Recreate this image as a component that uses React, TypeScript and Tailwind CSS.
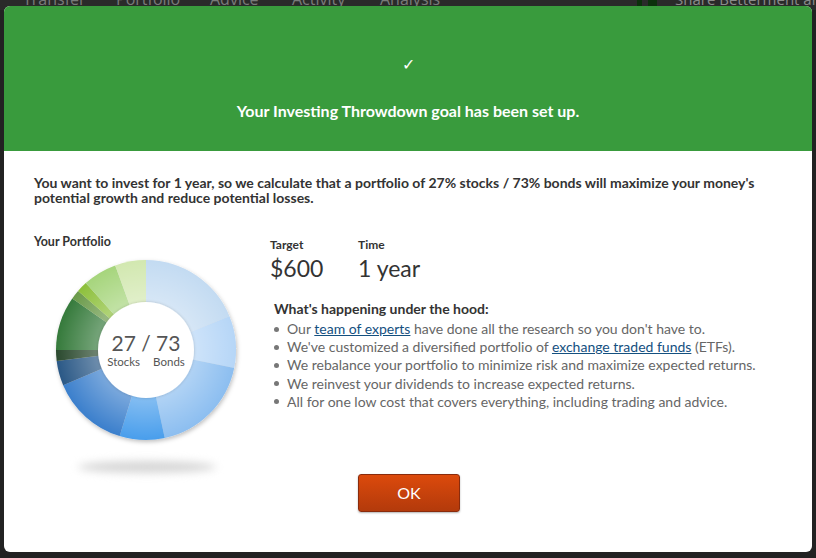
import React from 'react'

const slices = [
  { from: 0, to: 68, color: '#c3dbf2' },
  { from: 68, to: 101.5, color: '#b6d6f7' },
  { from: 101.5, to: 168, color: '#8cbef0' },
  { from: 168, to: 197, color: '#4a9eec' },
  { from: 197, to: 247, color: '#3a7fcc' },
  { from: 247, to: 263, color: '#2c5886' },
  { from: 263, to: 270, color: '#2b4a2f' },
  { from: 270, to: 305, color: '#357a3b' },
  { from: 305, to: 311, color: '#6a9a48' },
  { from: 311, to: 318, color: '#8dc03b' },
  { from: 318, to: 340, color: '#a6d57c' },
  { from: 340, to: 360, color: '#d2e8b0' },
]

function pt(r: number, deg: number) {
  const a = ((deg - 90) * Math.PI) / 180
  return `${(100 + r * Math.cos(a)).toFixed(2)} ${(100 + r * Math.sin(a)).toFixed(2)}`
}

function slicePath(from: number, to: number, r: number) {
  const large = to - from > 180 ? 1 : 0
  return `M100 100 L${pt(r, from)} A${r} ${r} 0 ${large} 1 ${pt(r, to)} Z`
}

function Donut() {
  return (
    <div className="relative h-[200px] w-[200px]">
      <svg viewBox="0 0 200 200" className="h-[200px] w-[200px]">
        <defs>
          <radialGradient id="shade" cx="100" cy="100" r="90" gradientUnits="userSpaceOnUse">
            <stop offset="0.5" stopColor="#ffffff" stopOpacity="0.35" />
            <stop offset="1" stopColor="#ffffff" stopOpacity="0" />
          </radialGradient>
          <filter id="ds" x="-20%" y="-20%" width="140%" height="140%">
            <feDropShadow dx="1" dy="2" stdDeviation="2" floodColor="#000" floodOpacity="0.25" />
          </filter>
          <filter id="inner" x="-20%" y="-20%" width="140%" height="140%">
            <feDropShadow dx="0" dy="0" stdDeviation="1.5" floodColor="#000" floodOpacity="0.2" />
          </filter>
        </defs>
        <g filter="url(#ds)">
          {slices.map((s) => (
            <path key={s.from} d={slicePath(s.from, s.to, 90)} fill={s.color} />
          ))}
        </g>
        <circle cx="100" cy="100" r="90" fill="url(#shade)" />
        <circle cx="100" cy="100" r="48" fill="#ffffff" filter="url(#inner)" />
      </svg>
      <div className="absolute inset-0 flex flex-col items-center justify-center text-[#555]">
        <div className="text-[21px] leading-none">27 / 73</div>
        <div className="mt-[3px] flex gap-[13px] text-[11.5px] leading-none">
          <span>Stocks</span>
          <span>Bonds</span>
        </div>
      </div>
    </div>
  )
}

const bullets = [
  <>Our <a className="text-[#14507f] underline">team of experts</a> have done all the research so you don't have to.</>,
  <>We've customized a diversified portfolio of <a className="text-[#14507f] underline">exchange traded funds</a> (ETFs).</>,
  <>We rebalance your portfolio to minimize risk and maximize expected returns.</>,
  <>We reinvest your dividends to increase expected returns.</>,
  <>All for one low cost that covers everything, including trading and advice.</>,
]

export default function App() {
  return (
    <div
      className="relative h-[558px] w-[816px] overflow-hidden bg-[#222222]"
      style={{ fontFamily: 'Lato, "Open Sans", sans-serif' }}
    >
      {/* page nav behind the overlay */}
      <div
        className="-mt-[12px] flex h-[22px] items-center bg-[#2a2a2a] pl-[23px] text-[16px] text-[#7a7a7a]"
        style={{ fontFamily: '"Open Sans", sans-serif' }}
      >
        <span className="w-[93px] shrink-0">Transfer</span>
        <span className="w-[94px] shrink-0">Portfolio</span>
        <span className="w-[82px] shrink-0">Advice</span>
        <span className="w-[88px] shrink-0">Activity</span>
        <span className="w-[257px] shrink-0">Analysis</span>
        <span className="mr-[6px] h-[14px] w-[5px] shrink-0 bg-[#0c300c]" />
        <span className="mr-[18px] h-[14px] w-[9px] shrink-0 bg-[#0c300c]" />
        <span className="shrink-0 whitespace-nowrap text-[15px] text-[#8a8a8a]">Share Betterment and</span>
      </div>

      <div className="absolute left-[4px] top-[6px] flex h-[546px] w-[808px] flex-col overflow-hidden rounded-[6px] bg-white">
        <div className="flex h-[145px] flex-col items-center bg-[#399b3d] text-white">
          <div className="mt-[50px] text-[16px] leading-none">✓</div>
          <div className="mt-[27px] text-[16px] font-bold">Your Investing Throwdown goal has been set up.</div>
        </div>

        <div className="px-[30px] pt-[24px]">
          <p className="text-[14px] font-bold leading-[15px] text-[#333]">
            You want to invest for 1 year, so we calculate that a portfolio of 27% stocks / 73% bonds will maximize your money's
            potential growth and reduce potential losses.
          </p>

          <div className="mt-[32px] flex">
            <div className="w-[236px]">
              <div className="-mt-[3px] text-[12.5px] font-bold leading-[16px] text-[#333]">Your Portfolio</div>
              <div className="ml-[12px]">
                <Donut />
              </div>
              <div className="ml-[44px] mt-[11px] h-[12px] w-[138px] rounded-[50%] bg-[#d6d6d6] blur-[4px]" />
            </div>

            <div className="flex-1">
              <div className="flex">
                <div className="w-[88px]">
                  <div className="text-[12px] font-bold leading-[16px] text-[#333]">Target</div>
                  <div className="mt-[1px] text-[23px] leading-[28px] text-[#333]">$600</div>
                </div>
                <div>
                  <div className="text-[12px] font-bold leading-[16px] text-[#333]">Time</div>
                  <div className="mt-[1px] text-[23px] leading-[28px] text-[#333]">1 year</div>
                </div>
              </div>

              <div className="ml-[4px] mt-[17px] text-[14px] font-bold leading-[20px] text-[#333]">
                What's happening under the hood:
              </div>
              <ul className="ml-[4px] mt-[1px] text-[14px] leading-[18.2px] text-[#666]">
                {bullets.map((item, i) => (
                  <li key={i} className="flex items-center">
                    <span className="mr-[8px] h-[5px] w-[5px] shrink-0 rounded-full bg-[#777]" />
                    <span>{item}</span>
                  </li>
                ))}
              </ul>
            </div>
          </div>
        </div>

        <div className="mt-auto mb-[40px] flex justify-center">
          <button className="ml-[2px] h-[38px] w-[102px] rounded-[3px] border border-[#8a2b0c] bg-gradient-to-b from-[#dc4a0c] to-[#b33a0b] text-[16px] text-white shadow-[0_1px_2px_rgba(0,0,0,0.3)]">
            OK
          </button>
        </div>
      </div>
    </div>
  )
}
